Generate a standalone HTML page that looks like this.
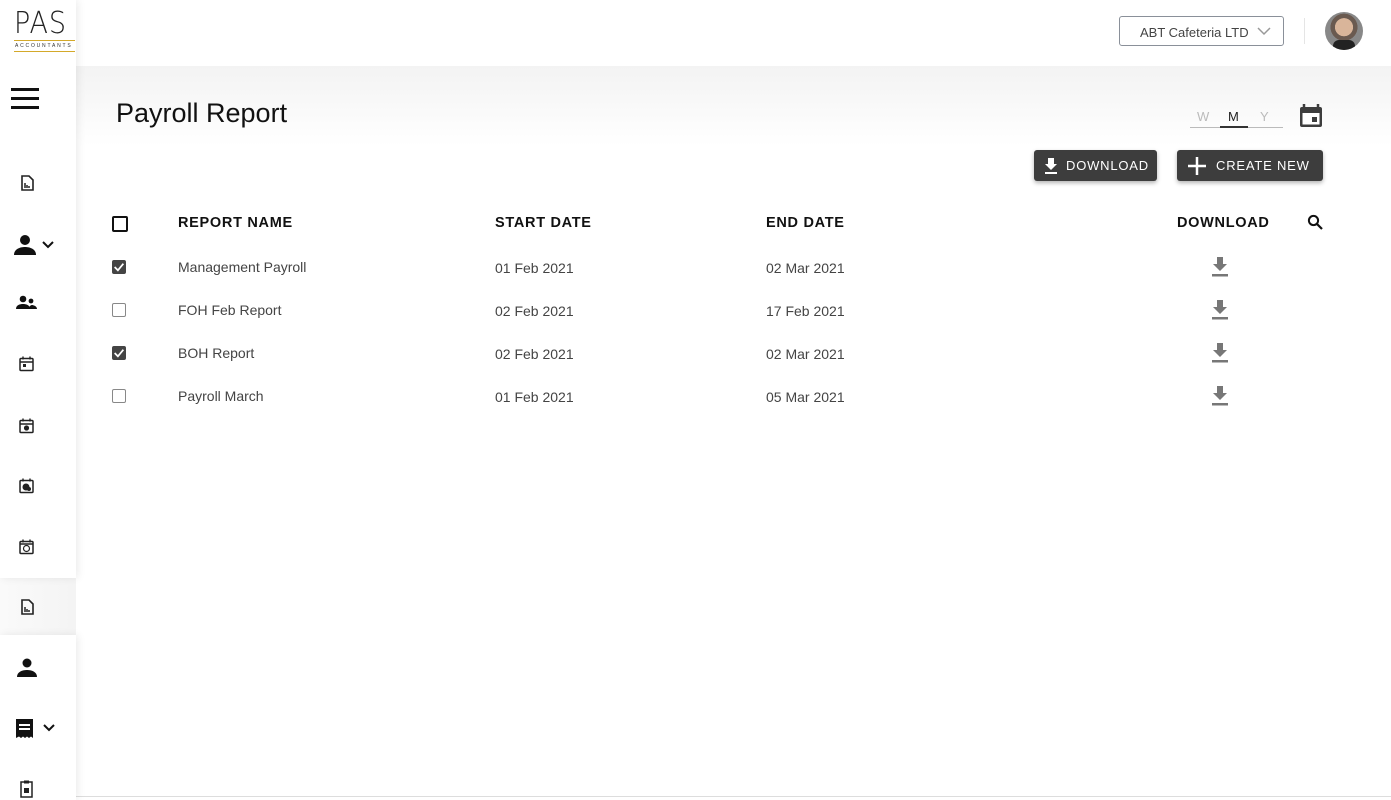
<!DOCTYPE html>
<html><head><meta charset="utf-8"><style>
*{margin:0;padding:0;box-sizing:border-box}
body{width:1391px;height:800px;overflow:hidden;background:#fff;font-family:"Liberation Sans",Roboto,sans-serif;position:relative;color:#222}
.abs{position:absolute}
.topgrad{left:76px;top:66px;width:1315px;height:80px;background:linear-gradient(#f3f3f3,#fff)}
.side{left:0;width:76px;background:#fff;box-shadow:2px 0 8px rgba(0,0,0,.08)}
.ic{position:absolute;left:18px}
.th{position:absolute;top:215px;font-size:14.5px;font-weight:bold;letter-spacing:.7px;color:#111}
.td{position:absolute;font-size:14px;color:#444}
.cb{position:absolute;left:112px;width:14px;height:14px;border:1.5px solid #888;border-radius:2px;background:#fff}
.cb.on{background:#444;border-color:#444}
.btn{position:absolute;top:150px;height:31px;background:#3d3d3d;color:#fff;border-radius:3px;font-size:13px;letter-spacing:.8px;box-shadow:0 2px 4px rgba(0,0,0,.3);display:flex;align-items:center}
</style></head><body>
<div class="abs topgrad"></div>
<div class="abs" style="left:76px;top:796px;width:1315px;height:1px;background:#ddd"></div>
<div class="abs" style="left:0;top:578px;width:76px;height:57px;background:linear-gradient(90deg,#fafafa,#f4f4f4)"></div>
<div class="abs side" style="top:0;height:578px"></div>
<div class="abs side" style="top:635px;height:165px"></div>
<!-- logo -->
<div class="abs" style="left:14px;top:6px;font-size:30px;font-weight:300;letter-spacing:1px;color:#222;font-family:'DejaVu Sans',sans-serif;transform:scaleX(.9);transform-origin:left">PAS</div>
<div class="abs" style="left:14px;top:40px;width:61px;height:1px;background:#d4a92a"></div>
<div class="abs" style="left:15px;top:43px;font-size:5px;letter-spacing:1.8px;color:#333">ACCOUNTANTS</div>
<div class="abs" style="left:14px;top:51px;width:61px;height:1px;background:#d4a92a"></div>
<!-- hamburger -->
<div class="abs" style="left:11px;top:88px;width:28px;height:3px;background:#111;box-shadow:0 9px 0 #111,0 18px 0 #111"></div>
<!-- side icons -->
<svg class="ic" style="top:174px" width="18" height="18" viewBox="0 0 18 18"><path d="M4 2h7l4 4v10H4z" fill="none" stroke="#222" stroke-width="1.6"/><path d="M7 9v5M9 11v3M11 12v2" stroke="#222" stroke-width="1.5"/></svg>
<svg class="abs" style="left:13px;top:233px" width="46" height="24" viewBox="0 0 46 24"><circle cx="12" cy="7" r="5" fill="#111"/><path d="M1 22c0-6 6-8 11-8s11 2 11 8z" fill="#111"/><path d="M30 9l5 5 5-5" fill="none" stroke="#111" stroke-width="2"/></svg>
<svg class="abs" style="left:16px;top:295px" width="22" height="16" viewBox="0 0 22 16"><circle cx="7" cy="4" r="3.3" fill="#111"/><path d="M0 14c0-4 4-5 7-5s7 1 7 5z" fill="#111"/><circle cx="15" cy="6" r="2.4" fill="#111"/><path d="M13 14c0-3 2-4 3-4s5 1 5 4z" fill="#111"/></svg>
<svg class="ic" style="top:355px" width="18" height="18" viewBox="0 0 18 18"><rect x="2" y="3.5" width="13" height="12" rx="1" fill="none" stroke="#222" stroke-width="1.5"/><path d="M2 7h13M5 1.5v3M12 1.5v3" stroke="#222" stroke-width="1.4"/><rect x="5" y="9" width="3" height="3" fill="#222"/></svg>
<svg class="ic" style="top:417px" width="18" height="18" viewBox="0 0 18 18"><rect x="2" y="3.5" width="13" height="12" rx="1" fill="none" stroke="#222" stroke-width="1.5"/><path d="M2 7h13M5 1.5v3M12 1.5v3" stroke="#222" stroke-width="1.4"/><circle cx="8.5" cy="11" r="2.6" fill="#222"/></svg>
<svg class="ic" style="top:477px" width="18" height="18" viewBox="0 0 18 18"><rect x="2" y="3.5" width="13" height="12" rx="1" fill="none" stroke="#222" stroke-width="1.5"/><path d="M5 1.5v3M12 1.5v3" stroke="#222" stroke-width="1.4"/><circle cx="8" cy="10" r="3.5" fill="#222"/><circle cx="11" cy="12" r="2" fill="#222"/></svg>
<svg class="ic" style="top:538px" width="18" height="18" viewBox="0 0 18 18"><rect x="2" y="3.5" width="13" height="12" rx="1" fill="none" stroke="#222" stroke-width="1.5"/><path d="M2 6h13M5 1.5v3M12 1.5v3" stroke="#222" stroke-width="1.4"/><circle cx="8.5" cy="10.5" r="3" fill="none" stroke="#222" stroke-width="1.2"/></svg>
<svg class="ic" style="top:598px" width="18" height="18" viewBox="0 0 18 18"><path d="M4 2h7l4 4v10H4z" fill="none" stroke="#222" stroke-width="1.6"/><path d="M7 9v5M9 11v3M11 12v2" stroke="#222" stroke-width="1.5"/></svg>
<svg class="abs" style="left:16px;top:657px" width="22" height="22" viewBox="0 0 22 22"><circle cx="11" cy="6" r="4.5" fill="#111"/><path d="M1 20c0-5 5-7 10-7s10 2 10 7z" fill="#111"/></svg>
<svg class="abs" style="left:15px;top:718px" width="44" height="22" viewBox="0 0 44 22"><path d="M1 1h17v19l-2-1.5-2 1.5-2-1.5-2 1.5-2-1.5-2 1.5-2-1.5-3 1.5z" fill="#111"/><path d="M4 7h11M4 11h11" stroke="#fff" stroke-width="2"/><path d="M29 7l5 5 5-5" fill="none" stroke="#111" stroke-width="2"/></svg>
<svg class="ic" style="top:779px" width="18" height="20" viewBox="0 0 18 20"><rect x="3" y="3" width="11" height="15" fill="none" stroke="#222" stroke-width="1.5"/><rect x="6" y="1.5" width="5" height="3" fill="#222"/><rect x="6" y="9" width="5" height="5" fill="#222"/></svg>
<!-- header right -->
<div class="abs" style="left:1119px;top:16px;width:165px;height:30px;border:1px solid #8a9099;border-radius:3px;font-size:13px;color:#444;padding:8px 0 0 20px">ABT Cafeteria LTD</div>
<svg class="abs" style="left:1257px;top:26px" width="14" height="10" viewBox="0 0 14 10"><path d="M1 2l6 6 6-6" fill="none" stroke="#999" stroke-width="1.5"/></svg>
<div class="abs" style="left:1304px;top:18px;width:1px;height:26px;background:#e5e5e5"></div>
<div class="abs" style="left:1325px;top:12px;width:38px;height:38px;border-radius:50%;background:radial-gradient(circle at 50% 40%,#d9b59a 0 30%,#6a5a50 31% 45%,#888 46%);overflow:hidden"><div style="position:absolute;left:8px;top:28px;width:22px;height:12px;background:#222;border-radius:6px 6px 0 0"></div></div>
<!-- title -->
<div class="abs" style="left:116px;top:98px;font-size:27px;color:#111">Payroll Report</div>
<div class="abs" style="left:1190px;top:109px;font-size:13px;color:#bbb;width:93px">
<span style="position:absolute;left:7px">W</span><span style="position:absolute;left:38px;color:#222">M</span><span style="position:absolute;left:70px">Y</span></div>
<div class="abs" style="left:1190px;top:127px;width:93px;height:1px;background:#bbb"></div>
<div class="abs" style="left:1220px;top:126px;width:28px;height:2px;background:#333"></div>
<svg class="abs" style="left:1298px;top:103px" width="26" height="26" viewBox="0 0 26 26"><path d="M6 1v4M20 1v4" stroke="#3d3d3d" stroke-width="2.5"/><rect x="2" y="4" width="22" height="20" rx="2" fill="#3d3d3d"/><rect x="4.5" y="10" width="17" height="11.5" fill="#fff"/><rect x="14" y="14" width="5" height="5" fill="#3d3d3d"/></svg>
<div class="btn" style="left:1034px;width:123px"><svg style="margin:0 8px 0 10px" width="14" height="16" viewBox="0 0 14 16"><path d="M4 0h6v6h3l-6 6-6-6h3z" fill="#fff"/><rect x="1" y="14" width="12" height="2" fill="#fff"/></svg>DOWNLOAD</div>
<div class="btn" style="left:1177px;width:146px"><svg style="margin:0 9px 0 10px" width="20" height="20" viewBox="0 0 20 20"><path d="M10 1v18M1 10h18" stroke="#fff" stroke-width="2.5"/></svg>CREATE NEW</div>
<!-- table -->
<div class="abs" style="left:112px;top:216px;width:16px;height:16px;border:2px solid #111;border-radius:2px"></div>
<div class="th" style="left:178px">REPORT NAME</div>
<div class="th" style="left:495px">START DATE</div>
<div class="th" style="left:766px">END DATE</div>
<div class="th" style="left:1177px">DOWNLOAD</div>
<svg class="abs" style="left:1307px;top:214px" width="17" height="17" viewBox="0 0 17 17"><circle cx="6.5" cy="6.5" r="4.6" fill="none" stroke="#111" stroke-width="2"/><path d="M10 10l5 5" stroke="#111" stroke-width="2.2"/></svg>

<div class="cb on" style="top:260px"></div><svg class="abs" style="left:113px;top:262px" width="12" height="10" viewBox="0 0 11 9"><path d="M1.5 4.5l3 3 5-6" fill="none" stroke="#fff" stroke-width="1.6"/></svg>
<div class="td" style="left:178px;top:259px">Management Payroll</div><div class="td" style="left:495px;top:260px">01 Feb 2021</div><div class="td" style="left:766px;top:260px">02 Mar 2021</div>
<div class="cb" style="top:303px"></div>
<div class="td" style="left:178px;top:302px">FOH Feb Report</div><div class="td" style="left:495px;top:303px">02 Feb 2021</div><div class="td" style="left:766px;top:303px">17 Feb 2021</div>
<div class="cb on" style="top:346px"></div><svg class="abs" style="left:113px;top:348px" width="12" height="10" viewBox="0 0 11 9"><path d="M1.5 4.5l3 3 5-6" fill="none" stroke="#fff" stroke-width="1.6"/></svg>
<div class="td" style="left:178px;top:345px">BOH Report</div><div class="td" style="left:495px;top:346px">02 Feb 2021</div><div class="td" style="left:766px;top:346px">02 Mar 2021</div>
<div class="cb" style="top:389px"></div>
<div class="td" style="left:178px;top:388px">Payroll March</div><div class="td" style="left:495px;top:389px">01 Feb 2021</div><div class="td" style="left:766px;top:389px">05 Mar 2021</div>

<svg class="abs" style="left:1211px;top:257px" width="18" height="20" viewBox="0 0 18 20"><path d="M6 0h6v7h4l-7 7-7-7h4z" fill="#777"/><rect x="1" y="17" width="16" height="2.5" fill="#777"/></svg>
<svg class="abs" style="left:1211px;top:300px" width="18" height="20" viewBox="0 0 18 20"><path d="M6 0h6v7h4l-7 7-7-7h4z" fill="#777"/><rect x="1" y="17" width="16" height="2.5" fill="#777"/></svg>
<svg class="abs" style="left:1211px;top:343px" width="18" height="20" viewBox="0 0 18 20"><path d="M6 0h6v7h4l-7 7-7-7h4z" fill="#777"/><rect x="1" y="17" width="16" height="2.5" fill="#777"/></svg>
<svg class="abs" style="left:1211px;top:386px" width="18" height="20" viewBox="0 0 18 20"><path d="M6 0h6v7h4l-7 7-7-7h4z" fill="#777"/><rect x="1" y="17" width="16" height="2.5" fill="#777"/></svg>
</body></html>
